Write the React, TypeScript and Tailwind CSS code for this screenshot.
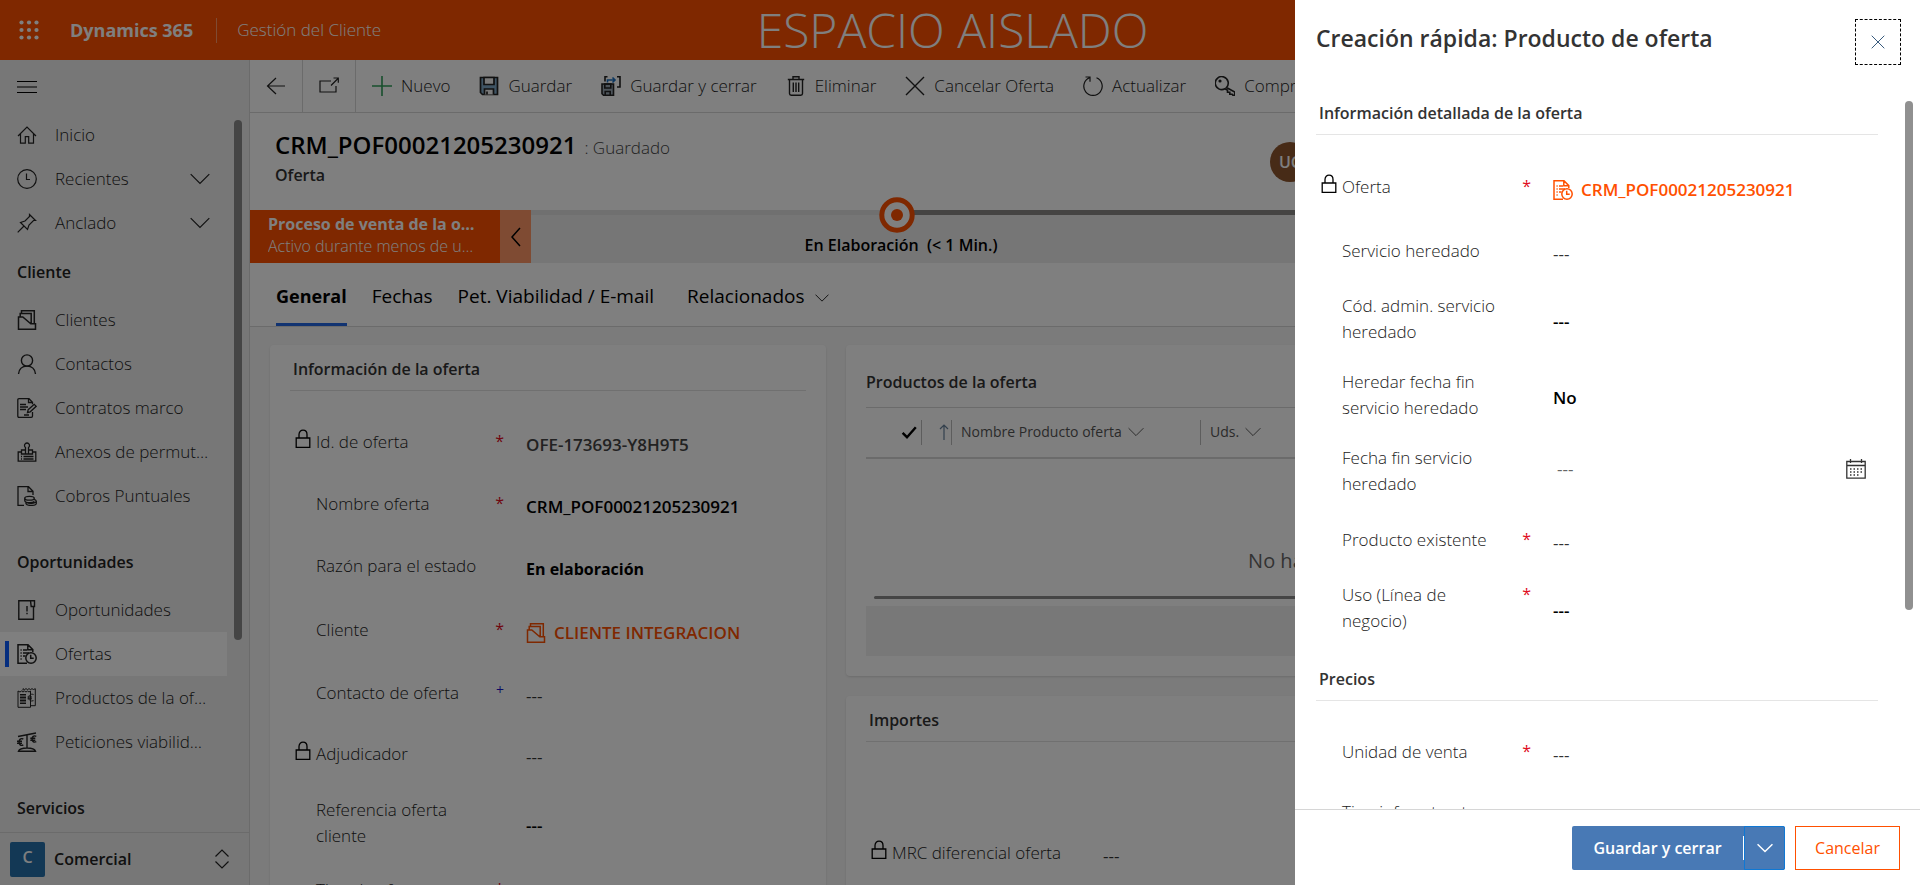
import React from "react";

type IconProps = { className?: string };

function Svg({
  children,
  className = "size-5",
  box = "0 0 20 20",
  width = 1.2,
}: IconProps & { children: React.ReactNode; box?: string; width?: number }) {
  return (
    <svg
      viewBox={box}
      className={`shrink-0 ${className}`}
      fill="none"
      stroke="currentColor"
      strokeWidth={width}
      aria-hidden="true"
    >
      {children}
    </svg>
  );
}

const Waffle = () => (
  <svg viewBox="0 0 20 20" className="size-5 shrink-0" fill="currentColor" aria-hidden="true">
    {[2.5, 10, 17.5].map((y) => [2.5, 10, 17.5].map((x) => <circle key={`${x}-${y}`} cx={x} cy={y} r="2.1" />))}
  </svg>
);

const Chevron = ({ className = "w-5 h-3", width }: IconProps & { width?: number }) => (
  <Svg className={className} box="0 0 20 12" width={width}>
    <path d="M0.7 1.2 10 10.5 19.3 1.2" />
  </Svg>
);

const HomeIcon = () => (
  <Svg>
    <path d="M1 11 10 2l9 9M3.500 9v9.200h4.800v-6.500h3.400v6.500h4.800V9" />
  </Svg>
);
const ClockIcon = () => (
  <Svg>
    <circle cx="10" cy="10" r="9.3" />
    <path d="M9.500 4.500V10.500h3.500" />
  </Svg>
);
const PinIcon = () => (
  <Svg>
    <path d="m.7 19.300 6.300-6.300M3.500 9.500l7 7 1.500-4.500 4.500-4.500h2L12.500 1.500v2L8 8z" />
  </Svg>
);
const FolderIcon = ({ className }: IconProps) => (
  <Svg className={className} width={1.5}>
    <path d="M1.500 19.200V7h4.300l8 6.800h4.700v5.400zM3.200 6.800V3.600h11v9.500M4.500 3.300V.8h12.800v12.800" />
  </Svg>
);
const PersonIcon = () => (
  <Svg width={1.4}>
    <circle cx="10" cy="6.500" r="5.600" />
    <path d="M1.500 20c.5-4.800 3.700-7.900 8.500-7.900s8 3.100 8.500 7.900" />
  </Svg>
);
const ContractIcon = () => (
  <Svg width={1.3}>
    <path d="M15.500 14v4q0 1.300-1.300 1.300H2Q.8 19.300.8 18V2Q.8.700 2 .700h10l3.500 3.500v2M11.500.700v3.800h4M3 6.500h6M3 9h8M3 11.500h6M7 17h5" />
    <path d="m10.500 14.500.7-2.800 6-5.400 2 2-6 5.500z" />
  </Svg>
);
const StampIcon = () => (
  <Svg width={1.3}>
    <path d="M4.500 10H1.200v9.200h17.600V10h-3.300M4.500 12V8h4V5.500a2.500 2.500 0 1 1 3 0V8h4v4zM8.500 8v4M11.500 8v4M4 14.500h1M6.500 14.500h10M4 17h1M6.500 17h10" />
  </Svg>
);
const CoinsIcon = () => (
  <Svg width={1.3}>
    <path d="M7 19.300H1V.700h10.500l4.500 4.500V9M11 .900v4.600h4.800" />
    <ellipse cx="12.500" cy="12.300" rx="4.800" ry="1.900" />
    <path d="M7.800 12.500v2.300c.5 2.500 8 2.500 9.500.6M9 16v1.800c1 2.400 10 2 10.300-.3v-2.300c-.3-1.300-1.300-1.600-2.500-1.800M9.500 16.300c2 1.600 8.500 1.300 9.500-.6" />
  </Svg>
);
const OpportunityIcon = () => (
  <Svg width={1.4}>
    <path d="M13.500.8H1.800v18.400h14.700V7M13.500.8h4V6.500h-3.300zM10 6v5.500M10 12.800v1.500" />
  </Svg>
);
const OfferIcon = ({ className }: IconProps) => (
  <Svg className={className} width={1.5}>
    <path d="M10 19.200H1V.800h10l4.800 4.800V8M10.800 1v4.800h4.800M3.500 6h1.200M6 6h4M3.500 9h1.200M6 9h6M3.500 12h1.200M6 12h2.500M3.500 15h1.200" />
    <circle cx="14" cy="14" r="5.200" />
    <path d="M13.700 10.800v3.500h3" />
  </Svg>
);
const ProductsIcon = () => (
  <Svg width={1}>
    <path d="M1 3v16.300h12.500V3l-1.500 1-1.500-1L9 4 7.500 3 6 4 4.500 3 3 4zM6 2.500V.700l1.500.8 1.500-.8 1.500.8 1.500-.8 1.500.8 1.500-.8 1.500.8 1.800-.8v17H14" />
    <path d="M3 6.500h6M3 8h6M3 9.500h6M3 11h6M3 12.500h6M3 14h6M3 15.500h6" />
    <path d="M16.500 6.500c-3-1-4.800.8-4.800 3.200s1.800 4 4.800 3M10.500 9h4.500M10.500 10.800h4.500" />
  </Svg>
);
const ScalesIcon = () => (
  <Svg width={1.4}>
    <path d="M1 4.500 19 1M10 3v13M1.500 19.300c1.500-4.400 15.500-4.400 17 0z" />
    <path d="M6.300 7c-2.700-1.200-4.200.6-4.200 3s1.500 4.200 4.200 3M0 9.300h5M0 11.300h5M19.300 4.300c-2.700-1.200-4.200.4-4.200 2.700s1.500 3.900 4.200 2.700M13.300 6.300h5M13.300 8.200h5" />
  </Svg>
);
const LockIcon = () => (
  <Svg className="h-5 w-4" box="0 0 16 20" width={1.3}>
    <path d="M1.200 9h13.600v9.300H1.200zM4 9V5.500C4 -.3 12 -.3 12 5.500V9" />
  </Svg>
);
const BackIcon = () => (
  <Svg>
    <path d="M19 10H1.500M10 2 1.500 10l8.500 8" />
  </Svg>
);
const PopOutIcon = () => (
  <Svg>
    <path d="M12 5H1v11h16v-6M12 9.500l7-7M14.500 2h4.800v4.800" />
  </Svg>
);
const PlusIcon = () => (
  <Svg className="size-5 text-[#2f9e5a]" width={1.6}>
    <path d="M10 0v20M0 10h20" />
  </Svg>
);
const SaveIcon = () => (
  <Svg width={1.7}>
    <path d="M1.500 1.500h17v17h-15l-2-2z" fill="#7fa8c8" />
    <path d="M5 1.500h10v7H5zM5.500 18.500v-5.500h9v5.500" fill="#f4f4f4" />
    <path d="M8 15.500v3" />
  </Svg>
);
const SaveCloseIcon = () => (
  <Svg width={1.6}>
    <path d="M1 8h11.500v11.200H2.500L1 17.700z" fill="#9aa8b5" />
    <path d="M3.800 8h6v4h-6zM4.200 19v-3.500h5V19" />
    <path d="M4 5.500V.800h2.500M16 .800h3V11h-3" />
    <path d="M6.500 6.500V4h7M11.500 1.500 14 4l-2.500 2.500" stroke="#1a6fc0" />
  </Svg>
);
const TrashIcon = () => (
  <Svg width={1.4}>
    <path d="M1.800 3.500h16.400M3.500 3.500v14q0 1.700 1.700 1.700h9.600q1.700 0 1.700-1.700v-14M7 3.500V.8h6v2.700M7.300 6.500v9.500M10 6.500v9.500M12.700 6.500v9.500" />
  </Svg>
);
const CrossIcon = ({ className }: IconProps) => (
  <Svg className={className} width={1.4}>
    <path d="m1 1 18 18M19 1 1 19" />
  </Svg>
);
const RefreshIcon = () => (
  <Svg>
    <path d="M6.500 1.700A9.200 9.200 0 1 0 13.500 1.700M2.500 1h4.500v4.800" />
  </Svg>
);
const KeyIcon = () => (
  <Svg width={1.6}>
    <path d="M11.500 11.500A6.500 6.500 0 1 0 10 12.700l2.500 1.500v2h2.300v2h2.400l.8 1.200h1.700V16z" />
    <circle cx="5" cy="5" r=".8" />
  </Svg>
);
const CalendarIcon = () => (
  <Svg width={1.3}>
    <path d="M.8 2.500h18.400v16.700H.8zM.8 6.500h18.400M4.500 0v4M15.500 0v4" />
    <path d="M4 10h12.500M4 13h12.500M4 16h9" strokeDasharray="1.500 2" strokeWidth="1.500" />
  </Svg>
);

type NavItem = { label: string; icon: React.ReactNode; active?: boolean };

const homeItems: (NavItem & { expandable?: boolean })[] = [
  { label: "Inicio", icon: <HomeIcon /> },
  { label: "Recientes", icon: <ClockIcon />, expandable: true },
  { label: "Anclado", icon: <PinIcon />, expandable: true },
];

const clientItems: NavItem[] = [
  { label: "Clientes", icon: <FolderIcon /> },
  { label: "Contactos", icon: <PersonIcon /> },
  { label: "Contratos marco", icon: <ContractIcon /> },
  { label: "Anexos de permutas", icon: <StampIcon /> },
  { label: "Cobros Puntuales", icon: <CoinsIcon /> },
];

const opportunityItems: NavItem[] = [
  { label: "Oportunidades", icon: <OpportunityIcon /> },
  { label: "Ofertas", icon: <OfferIcon />, active: true },
  { label: "Productos de la oferta", icon: <ProductsIcon /> },
  { label: "Peticiones viabilidades", icon: <ScalesIcon /> },
];

function NavLink({ label, icon, active }: NavItem) {
  return (
    <li>
      <a
        href="#"
        className={`relative flex h-11 items-center gap-[18px] pr-4 pl-[17px] ${active ? "bg-white" : ""}`}
      >
        {active && <span className="absolute left-[5px] h-[26px] w-1 bg-[#0b5cff]" />}
        {icon}
        <span className="truncate">{label}</span>
      </a>
    </li>
  );
}

function Sidebar() {
  return (
    <nav className="flex w-[250px] shrink-0 flex-col border-r border-[#d6d6d6] bg-[#efefef] text-[17px] font-light text-[#222]">
      <button className="flex h-[53px] shrink-0 items-center pl-[17px] text-black" aria-label="Menú">
        <Svg width={1.2}>
          <path d="M0 4.500h20M0 10h20M0 15.500h20" />
        </Svg>
      </button>
      <div className="flex min-h-0 flex-1 overflow-hidden">
        <div className="w-[227px]">
          <ul>
            {homeItems.map((item) =>
              item.expandable ? (
                <li key={item.label}>
                  <button className="flex h-11 w-full items-center gap-[18px] pr-[17px] pl-[17px] text-left">
                    {item.icon}
                    <span className="flex-1">{item.label}</span>
                    <Chevron />
                  </button>
                </li>
              ) : (
                <NavLink key={item.label} {...item} />
              ),
            )}
          </ul>
          <h2 className="flex h-[53px] items-center pl-[17px] text-base font-semibold">Cliente</h2>
          <ul>
            {clientItems.map((item) => (
              <NavLink key={item.label} {...item} />
            ))}
          </ul>
          <h2 className="mt-[17px] flex h-[53px] items-center pl-[17px] text-base font-semibold">Oportunidades</h2>
          <ul>
            {opportunityItems.map((item) => (
              <NavLink key={item.label} {...item} />
            ))}
          </ul>
          <h2 className="mt-[17px] flex h-[53px] items-center pl-[17px] text-base font-semibold">Servicios</h2>
        </div>
        <div className="mt-[7px] ml-[7px] h-[520px] w-2 rounded-full bg-[#8a8a8a]" />
      </div>
      <button className="flex h-[53px] shrink-0 items-center border-t border-[#d6d6d6] pr-5 pl-2.5 text-left">
        <span className="flex size-[35px] items-center justify-center rounded-xs bg-[#2670ab] pb-1 text-base font-semibold text-white">
          C
        </span>
        <span className="flex-1 pl-[9px] text-base font-semibold">Comercial</span>
        <Svg className="h-5 w-3.5" box="0 0 14 20">
          <path d="m.5 7.500 6.500-6.500 6.500 6.500M.5 12.500l6.500 6.500 6.500-6.500" />
        </Svg>
      </button>
    </nav>
  );
}

const commands = [
  { label: "Nuevo", icon: <PlusIcon /> },
  { label: "Guardar", icon: <SaveIcon /> },
  { label: "Guardar y cerrar", icon: <SaveCloseIcon /> },
  { label: "Eliminar", icon: <TrashIcon /> },
  { label: "Cancelar Oferta", icon: <CrossIcon /> },
  { label: "Actualizar", icon: <RefreshIcon /> },
  { label: "Comprobar acceso", icon: <KeyIcon /> },
];

function CommandBar() {
  return (
    <div className="flex h-[53px] shrink-0 overflow-hidden border-b border-[#d6d6d6] bg-white text-[17px] font-light text-[#222]">
      <button className="flex w-[53px] shrink-0 items-center justify-center border-r border-[#d6d6d6]" aria-label="Atrás">
        <BackIcon />
      </button>
      <button
        className="flex w-[53px] shrink-0 items-center justify-center border-r border-[#d6d6d6]"
        aria-label="Abrir en ventana nueva"
      >
        <PopOutIcon />
      </button>
      <div className="flex items-center gap-[29px] pl-4 whitespace-nowrap">
        {commands.map((c) => (
          <button key={c.label} className="flex items-center gap-[9px]">
            {c.icon}
            {c.label}
          </button>
        ))}
      </div>
    </div>
  );
}

function ProcessBar() {
  return (
    <div className="flex h-[53px] shrink-0 bg-[#ededed]">
      <div className="flex w-[250px] flex-col justify-center bg-[#ff5000] pr-5 pb-1 pl-[18px] text-base leading-[22px] text-white">
        <p className="truncate font-bold">Proceso de venta de la oferta</p>
        <p className="truncate font-light">Activo durante menos de un minuto</p>
      </div>
      <button className="flex w-[31px] items-center justify-center bg-[#ff9766] text-black" aria-label="Contraer">
        <Svg className="h-5 w-2.5" box="0 0 10 20" width={1.5}>
          <path d="M9 1 1 10l8 9" />
        </Svg>
      </button>
      <div className="relative flex w-[732px] flex-col items-center">
        <div className="flex h-[5px] w-full">
          <div className="flex-1 bg-[#e0e0e0]" />
          <div className="flex-1 bg-[#8a8886]" />
        </div>
        <svg viewBox="0 0 36 36" className="absolute -top-[13px] size-9" aria-hidden="true">
          <circle cx="18" cy="18" r="15.200" fill="#fff" stroke="#ff5000" strokeWidth="5" />
          <circle cx="18" cy="18" r="6" fill="#ff5000" />
        </svg>
        <p className="mt-[18px] pl-2 text-base leading-6 font-semibold whitespace-pre">{"En Elaboración  (< 1 Min.)"}</p>
      </div>
      <div className="h-[5px] flex-1 bg-[#8a8886]" />
    </div>
  );
}

type Field = {
  id: string;
  label: string;
  height: string;
  value?: string;
  mark?: "*" | "+";
  locked?: boolean;
  link?: React.ReactNode;
  date?: boolean;
  options?: boolean;
  tone?: string;
};

function FieldRow({ field, columns }: { field: Field; columns: string }) {
  const value = field.value ?? "---";
  const tone = field.tone ?? "font-semibold text-black";
  return (
    <div className={`grid items-center text-[17px] leading-[26px] ${columns} ${field.height}`}>
      <div className="flex items-start">
        <span className="flex w-[21px] shrink-0">{field.locked && <LockIcon />}</span>
        <label htmlFor={field.id} className="w-[172px] font-light text-[#222]">
          {field.label}
        </label>
        {field.mark && (
          <span
            className={`ml-auto pr-[22px] ${field.mark === "*" ? "text-base leading-6 text-[#e00b1c]" : "text-sm leading-5 text-[#1414c8]"}`}
          >
            {field.mark}
          </span>
        )}
      </div>
      <div className={`flex items-center ${field.date ? "justify-between pr-3 pb-1 pl-1" : "pt-1.5"}`}>
        {field.link ? (
          <a id={field.id} href="#" className="flex items-center gap-2 font-semibold text-[#ff5000]">
            {field.link}
            {value}
          </a>
        ) : field.options ? (
          <select id={field.id} className={`w-full appearance-none bg-transparent ${tone}`}>
            <option>{value}</option>
          </select>
        ) : (
          <input id={field.id} defaultValue={value} readOnly={field.locked} className={`w-full bg-transparent ${tone}`} />
        )}
        {field.date && (
          <button className="text-[#333]" aria-label="Elegir fecha">
            <CalendarIcon />
          </button>
        )}
      </div>
    </div>
  );
}

const offerFields: Field[] = [
  { id: "offer-id", label: "Id. de oferta", height: "h-[62px]", value: "OFE-173693-Y8H9T5", mark: "*", locked: true, tone: "font-semibold text-[#444]" },
  { id: "offer-name", label: "Nombre oferta", height: "h-[62px]", value: "CRM_POF00021205230921", mark: "*" },
  { id: "offer-state", label: "Razón para el estado", height: "h-[62px]", value: "En elaboración", options: true, tone: "text-base font-bold text-black" },
  { id: "offer-client", label: "Cliente", height: "h-[66px]", value: "CLIENTE INTEGRACION", mark: "*", link: <FolderIcon /> },
  { id: "offer-contact", label: "Contacto de oferta", height: "h-[60px]", mark: "+", tone: "text-[#333]" },
  { id: "offer-winner", label: "Adjudicador", height: "h-[62px]", locked: true, tone: "text-[#333]" },
  { id: "offer-ref", label: "Referencia oferta cliente", height: "h-[76px]" },
  { id: "offer-type", label: "Tipo de oferta", height: "h-[58px]", mark: "*", options: true },
];

function SortableHead({ label }: { label: string }) {
  return (
    <button className="flex h-[25px] items-center gap-1.5 border-l border-[#bbb] pl-[9px] text-sm">
      {label}
      <Chevron className="h-2.5 w-4" />
    </button>
  );
}

function OfferForm() {
  return (
    <div className="flex min-h-0 flex-1 items-start gap-5 overflow-hidden bg-[#f7f7f7] px-5 pt-[18px]">
      <section className="w-[556px] shrink-0 rounded-sm bg-white px-5 pt-[11px] shadow">
        <h2 className="border-b border-[#e1e1e1] pb-2 pl-[3px] text-base leading-[26px] font-semibold text-[#333]">
          Información de la oferta
        </h2>
        <div className="pt-5 pl-[5px]">
          {offerFields.map((f) => (
            <FieldRow key={f.id} field={f} columns="grid-cols-[231px_1fr]" />
          ))}
        </div>
      </section>
      <div className="flex min-w-0 flex-1 flex-col gap-5">
        <section className="flex flex-col rounded-sm bg-white px-5 pt-6 pb-5 shadow">
          <h2 className="pb-3 text-base leading-[26px] font-semibold text-[#333]">Productos de la oferta</h2>
          <table className="w-full table-fixed border-t border-[#d6d6d6] text-[#555]">
            <thead>
              <tr className="h-[50px] border-b-2 border-[#d6d6d6] text-left font-normal">
                <th className="w-[55px] pl-[35px]">
                  <Svg className="size-4 text-black" width={3}>
                    <path d="m2 11 5.500 5.500L18.500 4" />
                  </Svg>
                </th>
                <th className="w-[30px]">
                  <span className="flex h-[25px] items-center justify-end border-l border-[#bbb] pr-0.5">
                    <Svg className="h-4 w-2.5 text-[#66809a]" box="0 0 10 16">
                      <path d="M5 16V1M1 5l4-4 4 4" />
                    </Svg>
                  </span>
                </th>
                <th className="w-[249px] font-normal">
                  <SortableHead label="Nombre Producto oferta" />
                </th>
                <th className="font-normal">
                  <SortableHead label="Uds." />
                </th>
              </tr>
            </thead>
            <tbody>
              <tr>
                <td colSpan={4} className="h-[138px] pt-[68px] pr-2.5 text-center text-xl text-[#666]">
                  No hay datos disponibles.
                </td>
              </tr>
            </tbody>
          </table>
          <div className="mb-[7px] ml-2 h-[3px] rounded-full bg-[#8a8a8a]" />
          <div className="h-[50px] bg-[#f1f1f1]" />
        </section>
        <section className="rounded-sm bg-white px-5 pt-[11px] pb-24 shadow">
          <h2 className="border-b border-[#e1e1e1] pb-2 pl-[3px] text-base leading-[26px] font-semibold text-[#333]">
            Importes
          </h2>
          <div className="pt-20 pl-[5px]">
            <FieldRow
              field={{ id: "mrc", label: "MRC diferencial oferta", height: "h-[62px]", locked: true, tone: "text-[#333]" }}
              columns="grid-cols-[232px_1fr]"
            />
          </div>
        </section>
      </div>
    </div>
  );
}

function OfferPage() {
  return (
    <main className="flex min-w-0 flex-1 flex-col bg-white">
      <CommandBar />
      <div className="flex h-[97px] shrink-0 items-center px-[25px]">
        <div className="pb-1">
          <div className="flex items-baseline gap-2">
            <h1 className="text-2xl leading-[30px] font-semibold">CRM_POF00021205230921</h1>
            <span className="text-[17px] font-light text-[#444]">: Guardado</span>
          </div>
          <p className="text-base leading-7 font-semibold text-[#333]">Oferta</p>
        </div>
        <div className="ml-auto w-[625px]">
          <span className="flex size-10 items-center justify-center rounded-full bg-[#8e562e] text-base font-semibold text-white">
            UC
          </span>
        </div>
      </div>
      <ProcessBar />
      <div className="flex h-16 shrink-0 items-stretch gap-[25px] border-b border-[#d6d6d6] pl-[26px] text-[19px]">
        <button className="border-b-3 border-[#2266e3] pt-1.5 text-lg font-bold">General</button>
        <button className="border-b-3 border-transparent pt-1.5">Fechas</button>
        <button className="border-b-3 border-transparent pt-1.5">Pet. Viabilidad / E-mail</button>
        <button className="flex items-center gap-2.5 pt-[3px] pl-2">
          Relacionados
          <Chevron className="mt-1 h-2.5 w-3.5" />
        </button>
      </div>
      <OfferForm />
    </main>
  );
}

const detailFields: Field[] = [
  { id: "q-offer", label: "Oferta", height: "h-16", value: "CRM_POF00021205230921", mark: "*", locked: true, link: <OfferIcon /> },
  { id: "q-service", label: "Servicio heredado", height: "h-16", tone: "text-[#333]" },
  { id: "q-code", label: "Cód. admin. servicio heredado", height: "h-[72px]" },
  { id: "q-inherit", label: "Heredar fecha fin servicio heredado", height: "h-20", value: "No", options: true },
  { id: "q-end", label: "Fecha fin servicio heredado", height: "h-[72px]", date: true, tone: "text-[#666]" },
  { id: "q-product", label: "Producto existente", height: "h-[66px]", mark: "*", tone: "text-[#333]" },
  { id: "q-use", label: "Uso (Línea de negocio)", height: "h-[70px]", mark: "*", options: true },
];

const priceFields: Field[] = [
  { id: "q-unit", label: "Unidad de venta", height: "h-16", mark: "*", tone: "text-[#333]" },
  { id: "q-infra", label: "Tipo infraestructura", height: "h-14" },
];

function QuickCreate() {
  return (
    <aside
      role="dialog"
      aria-labelledby="quick-title"
      className="fixed inset-y-0 right-0 flex w-[625px] flex-col bg-white"
    >
      <header className="flex h-[93px] shrink-0 items-start justify-between pt-[19px] pr-[19px] pl-[21px]">
        <h1 id="quick-title" className="text-[23px] leading-[38px] font-semibold text-[#333]">
          Creación rápida: Producto de oferta
        </h1>
        <button
          className="flex size-[46px] items-center justify-center border border-dashed border-black text-[#33567a]"
          aria-label="Cerrar"
        >
          <CrossIcon className="size-3.5" />
        </button>
      </header>
      <div className="flex min-h-0 flex-1 overflow-hidden">
        <div className="ml-[21px] w-[562px]">
          <h2 className="mt-[7px] border-b border-[#e5e5e5] pb-2 pl-[3px] text-base leading-[26px] font-semibold text-[#333]">
            Información detallada de la oferta
          </h2>
          <div className="pt-5 pl-[5px]">
            {detailFields.map((f) => (
              <FieldRow key={f.id} field={f} columns="grid-cols-[232px_1fr]" />
            ))}
          </div>
          <h2 className="mt-[23px] border-b border-[#e5e5e5] pb-2 pl-[3px] text-base leading-[26px] font-semibold text-[#333]">
            Precios
          </h2>
          <div className="pt-[19px] pl-[5px]">
            {priceFields.map((f) => (
              <FieldRow key={f.id} field={f} columns="grid-cols-[232px_1fr]" />
            ))}
          </div>
        </div>
        <div className="mt-2 ml-[27px] h-[509px] w-2 rounded-full bg-[#909090]" />
      </div>
      <footer className="flex h-[76px] shrink-0 items-center justify-end border-t border-[#d6d6d6] pr-5">
        <div className="flex h-11 rounded-xs bg-[#4879b5] text-white">
          <button className="w-[171px] text-base font-semibold">Guardar y cerrar</button>
          <span className="my-2.5 w-px bg-white" />
          <button
            className="flex w-[41px] items-center justify-center rounded-r-xs border border-[#0f78d4]"
            aria-label="Más opciones de guardado"
          >
            <Chevron className="h-2.5 w-4" width={1.8} />
          </button>
        </div>
        <button className="ml-2.5 h-11 w-[105px] border border-[#ff5000] text-base text-[#ff5000]">Cancelar</button>
      </footer>
    </aside>
  );
}

export default function App() {
  return (
    <div className="flex h-screen flex-col overflow-hidden bg-white font-['Open_Sans','Noto_Sans',sans-serif] text-black">
      <header className="flex h-[60px] shrink-0 items-center bg-[#ff5000] text-white">
        <div className="flex flex-1 items-center pl-[19px]">
          <Waffle />
          <span className="pl-[31px] text-lg font-bold">Dynamics 365</span>
          <span className="mr-5 ml-[23px] h-[25px] w-px bg-[#ff9766]" />
          <span className="text-[17px] font-light">Gestión del Cliente</span>
        </div>
        <p className="pr-[34px] text-5xl leading-[60px] font-light">ESPACIO AISLADO</p>
        <div className="flex-1" />
      </header>
      <div className="flex min-h-0 flex-1">
        <Sidebar />
        <OfferPage />
      </div>
      <div className="fixed inset-0 bg-black/50" />
      <QuickCreate />
    </div>
  );
}
